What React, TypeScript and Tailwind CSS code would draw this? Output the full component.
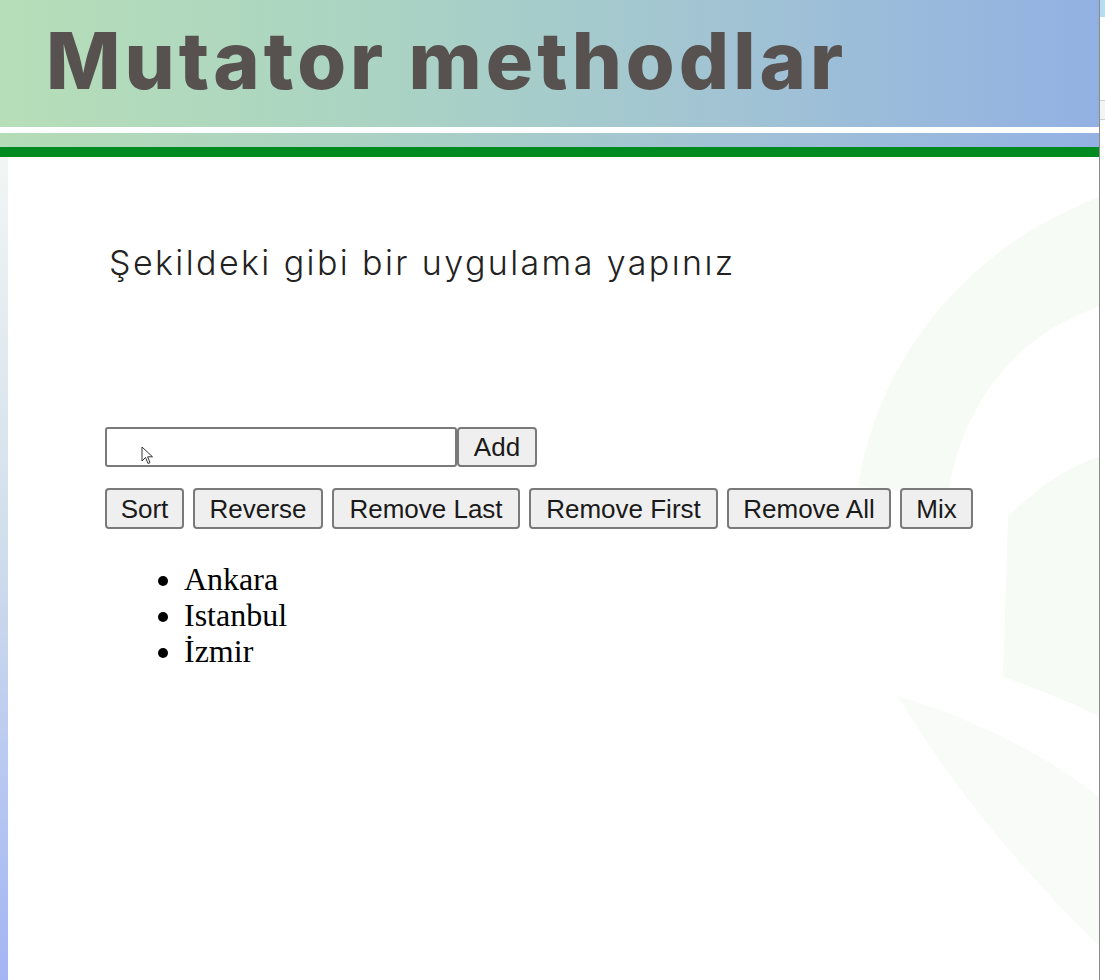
import { useState } from 'react'

const actions = [
  { label: 'Sort', width: 'w-[79px]' },
  { label: 'Reverse', width: 'w-[130px]' },
  { label: 'Remove Last', width: 'w-[188px]' },
  { label: 'Remove First', width: 'w-[189px]' },
  { label: 'Remove All', width: 'w-[164px]' },
  { label: 'Mix', width: 'w-[73px]' },
]

const cities = ['Ankara', 'Istanbul', 'İzmir']

// faint green swooshes behind the slide body
function Backdrop() {
  return (
    <svg className="pointer-events-none absolute inset-0 h-full w-full" viewBox="0 0 1091 824" preserveAspectRatio="none">
      <path d="M850 330 C 870 200, 960 90, 1091 40 L 1091 150 C 1000 180, 950 260, 940 340 Z" fill="#f7fbf6" />
      <path d="M1000 360 C 1030 330, 1060 310, 1091 300 L 1091 560 C 1050 540, 1020 530, 995 520 Z" fill="#f7fbf6" />
      <path d="M890 540 C 960 560, 1040 600, 1091 640 L 1091 790 C 1020 720, 950 640, 890 540 Z" fill="#f8fbf7" />
    </svg>
  )
}

function Cursor() {
  return (
    <svg className="pointer-events-none absolute left-[36px] top-[19px]" width="14" height="20" viewBox="0 0 14 20">
      <path d="M1 1 L1 15 L4.5 11.5 L7 17.5 L9 16.6 L6.6 10.8 L11.5 10.8 Z" fill="#fff" stroke="#333" strokeWidth="1" strokeLinejoin="round" />
    </svg>
  )
}

export default function App() {
  const [value, setValue] = useState('')

  return (
    <div className="flex h-[980px] w-[1105px] overflow-hidden bg-white">
      {/* Slide */}
      <div className="flex w-[1099px] flex-col">
        {/* Title band */}
        <div className="h-[127px] bg-[linear-gradient(90deg,#b6deb8_0%,#aad3c3_35%,#a2c4d3_65%,#92b1e3_100%)] pl-[46px] pt-[10px]">
          <h1 className="font-['Inter',sans-serif] text-[79px] font-extrabold leading-[100px] tracking-[4px] text-[#575250]">
            Mutator methodlar
          </h1>
        </div>
        <div className="h-[6px] bg-white" />
        <div className="h-[14px] bg-[linear-gradient(90deg,#b4dcb6_0%,#a8cfc6_40%,#a0c0d8_70%,#93b2e3_100%)]" />
        <div className="h-[10px] bg-[#008a1f]" />

        {/* Body */}
        <div className="relative flex flex-1">
          <div className="w-[8px] bg-[linear-gradient(180deg,#f2f6f4_0%,#d2dfec_45%,#a3b5f4_100%)]" />
          <div className="relative flex-1">
            <Backdrop />
            <div className="relative pl-[97px] pt-[86px]">
              <p className="pl-[4px] font-['Inter',sans-serif] text-[34px] font-light leading-[40px] tracking-[2.4px] text-[#222]">
                Şekildeki gibi bir uygulama yapınız
              </p>

              <div className="mt-[144px] flex font-['Liberation_Sans',Arial,sans-serif] text-[26px] text-[#1a1a1a]">
                <div className="relative">
                  <input
                    value={value}
                    onChange={(e) => setValue(e.target.value)}
                    className="h-[40px] w-[352px] rounded-[3px] border-2 border-[#7a7a7a] bg-white px-2 outline-none"
                  />
                  <Cursor />
                </div>
                <button className="h-[40px] w-[80px] rounded-[4px] border-2 border-[#7a7a7a] bg-[#efefef] leading-none">
                  Add
                </button>
              </div>

              <div className="mt-[21px] flex gap-[9px] font-['Liberation_Sans',Arial,sans-serif] text-[26px] text-[#1a1a1a]">
                {actions.map((a) => (
                  <button
                    key={a.label}
                    className={`h-[41px] ${a.width} rounded-[4px] border-2 border-[#7a7a7a] bg-[#efefef] leading-none`}
                  >
                    {a.label}
                  </button>
                ))}
              </div>

              <ul className="mt-[32px] list-disc pl-[79px] font-['Liberation_Serif','Times_New_Roman',serif] text-[32px] leading-[36px] text-black">
                {cities.map((c) => (
                  <li key={c}>{c}</li>
                ))}
              </ul>
            </div>
          </div>
        </div>
      </div>

      {/* Neighbouring window edge */}
      <div className="flex flex-1 flex-col border-l border-[#8a8a8a]">
        <div className="h-[17px] bg-[#b6ddf0]" />
        <div className="h-[83px] bg-white" />
        <div className="h-[20px] border-y border-[#d0d0d0] bg-[#f4f4f4]" />
        <div className="flex-1 bg-white" />
      </div>
    </div>
  )
}
